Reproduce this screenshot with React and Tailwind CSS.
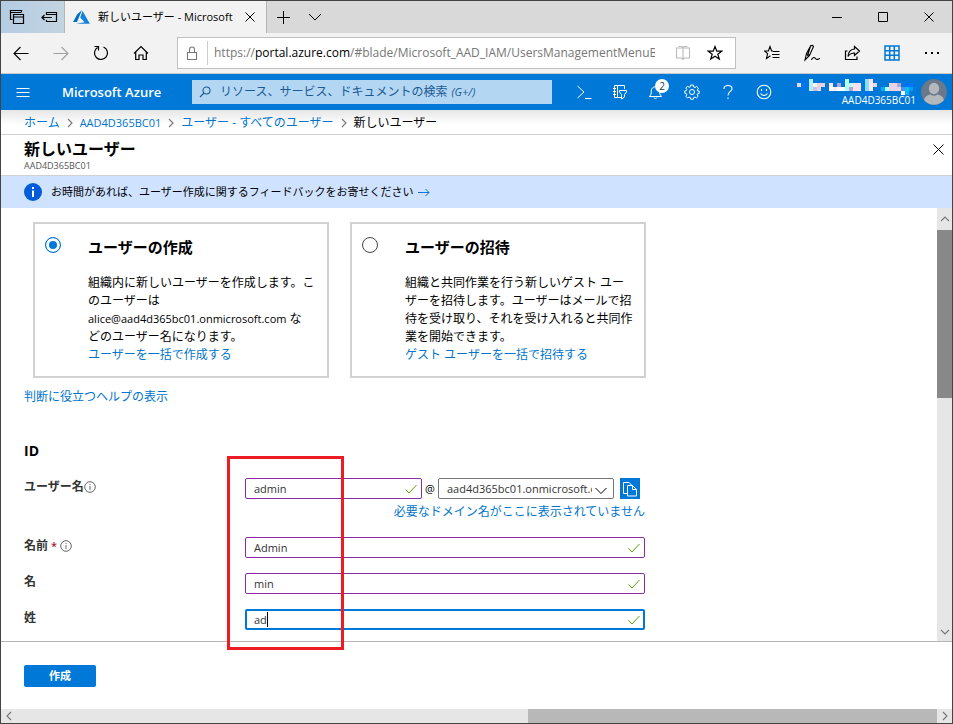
import { useState } from 'react';

const MOSAIC = [
  [12, 0, '#b0f0ff'], [48, 0, '#b8fff4'], [68, 0, '#90dcff'], [72, 0, '#ffe0ea'], [4, 0, '#0070f0'],
  [0, 4, '#e8d8e4'], [4, 4, '#0078f0'], [8, 4, '#0070f0'], [12, 4, '#b0f0ff'], [16, 4, '#fff0ea'],
  [20, 4, '#e4d4e4'], [24, 4, '#e4d4e4'], [32, 4, '#ffe8f0'], [40, 4, '#b0a4d8'], [48, 4, '#b8fff4'],
  [52, 4, '#b8fff4'], [56, 4, '#ffe0ea'], [60, 4, '#ffe0ea'], [68, 4, '#80e0ff'], [72, 4, '#ffe8f0'],
  [76, 4, '#e8d4e4'], [92, 4, '#e8d4e4'], [96, 4, '#e8d4e4'], [100, 4, '#b0a4d8'], [108, 4, '#0070f8'],
  [112, 4, '#0078ff'], [4, 8, '#0070f0'], [12, 8, '#b0f0ff'], [16, 8, '#c8c0e0'], [20, 8, '#e4d4e4'],
  [32, 8, '#ffffff'], [36, 8, '#ffe8f0'], [40, 8, '#ffffff'], [44, 8, '#ffffff'], [48, 8, '#a8fff0'],
  [52, 8, '#b0a4d8'], [56, 8, '#ffe0ea'], [60, 8, '#ffe0ea'], [68, 8, '#80e0ff'], [72, 8, '#ffe8f0'],
  [84, 8, '#00b0ff'], [88, 8, '#b0ffff'], [92, 8, '#e8d4e4'], [96, 8, '#e8d4e4'], [100, 8, '#e8d4e4'],
  [104, 8, '#5090e8'], [108, 8, '#00c0ff'], [112, 8, '#00a0f0'], [104, 12, '#ffffff'],
  [108, 12, '#00b8ff'], [68, 12, '#0070f0'],
];

function Icon({ size = 16, sw = 1, className = '', children }) {
  return (
    <svg
      width={size}
      height={size}
      viewBox={`0 0 ${size} ${size}`}
      fill="none"
      stroke="currentColor"
      strokeWidth={sw}
      className={`shrink-0 ${className}`}
      aria-hidden="true"
    >
      {children}
    </svg>
  );
}

const CloseIcon = ({ size = 12 }) => (
  <Icon size={size}>
    <path d={`M0.5 0.5L${size - 0.5} ${size - 0.5}M${size - 0.5} 0.5L0.5 ${size - 0.5}`} />
  </Icon>
);

const InfoIcon = () => (
  <Icon size={12} sw={0.9} className="text-[#555]">
    <circle cx="6" cy="6" r="5.300" />
    <path d="M6 5v4M6 3v1" />
  </Icon>
);

const Chevron = ({ d, className = '' }) => (
  <Icon size={10} sw={1.1} className={className}>
    <path d={d} />
  </Icon>
);

function IconButton({ label, className, children }) {
  return (
    <button type="button" aria-label={label} className={`flex items-center justify-center shrink-0 ${className}`}>
      {children}
    </button>
  );
}

function TabBar() {
  return (
    <div className="h-8 flex shrink-0 bg-[#d9d9d9]">
      <div className="w-16 flex shrink-0 bg-linear-to-r from-[#b4cce2] to-[#c3d4e2] border-r border-[#b5b5b5]">
        <IconButton label="保存したタブ" className="w-8">
          <Icon size={16} sw={1.2}>
            <path d="M3.5 10.500H1.500V1.500H12.500V3.500M1.500 3.500H12" />
            <path d="M4.500 5.500H14.500V14.500H4.500zM4.500 8H14.500" />
          </Icon>
        </IconButton>
        <IconButton label="タブを保存して閉じる" className="w-8">
          <Icon size={18} sw={1.2}>
            <path d="M6.500 7V4.500H16.500V13.500H6.500V12M6.500 6.500H16.500M2 9.500H12M4.500 7L2 9.500L4.500 12" />
          </Icon>
        </IconButton>
      </div>
      <div className="w-[202px] flex items-center shrink-0 bg-[#f2f2f2] pl-2 border-r border-[#b5b5b5]">
        <svg width="17" height="14" viewBox="0 0 17 14" className="shrink-0" aria-hidden="true">
          <path d="M9 0L4.300 4.200L0 12H4z" fill="#0072c6" />
          <path d="M9.600 1L7.200 7.500L11.600 12.300L3 13.800H16.800z" fill="#1182da" />
        </svg>
        <span className="ml-2 flex-1 min-w-0 overflow-hidden whitespace-nowrap text-[11px]">
          新しいユーザー - Microsoft Azure
        </span>
        <IconButton label="タブを閉じる" className="w-8 h-8">
          <CloseIcon size={10} />
        </IconButton>
      </div>
      <IconButton label="新しいタブ" className="w-8">
        <Icon size={13}><path d="M6.500 0V13M0 6.500H13" /></Icon>
      </IconButton>
      <IconButton label="タブのプレビュー" className="w-8">
        <Icon size={14}><path d="M1 4L7 10L13 4" /></Icon>
      </IconButton>
      <div className="ml-auto flex">
        <IconButton label="最小化" className="w-[46px]">
          <Icon size={10}><path d="M0 5.500H10" /></Icon>
        </IconButton>
        <IconButton label="最大化" className="w-[46px]">
          <Icon size={10}><path d="M0.500 0.500H9.500V9.500H0.500z" /></Icon>
        </IconButton>
        <IconButton label="閉じる" className="w-[46px]">
          <CloseIcon size={10} />
        </IconButton>
      </div>
    </div>
  );
}

function Toolbar() {
  return (
    <div className="h-[41px] flex items-center shrink-0 bg-[#f2f2f2] border-b border-[#c8c8c8]">
      <IconButton label="戻る" className="w-10 h-10">
        <Icon size={16} sw={1.1}><path d="M15.500 8.500H1M7.500 2L1 8.500L7.500 15" /></Icon>
      </IconButton>
      <IconButton label="進む" className="w-10 h-10 text-[#a0a0a0]">
        <Icon size={16} sw={1.1}><path d="M0.500 8.500H15M8.500 2L15 8.500L8.500 15" /></Icon>
      </IconButton>
      <IconButton label="更新" className="w-10 h-10">
        <Icon size={16} sw={1.2}><path d="M10.500 2A6.500 6.500 0 1 1 4.500 2.500M1.500 1.500H5.500V5.500" /></Icon>
      </IconButton>
      <IconButton label="ホーム" className="w-10 h-10">
        <Icon size={16} sw={1.2}>
          <path d="M1 8.500L8 1.500L15 8.500M2.700 7V14.500H6V10H10V14.500H13.300V7" />
        </Icon>
      </IconButton>
      <div className="ml-4 h-8 flex-1 min-w-0 flex items-center bg-white border border-[#c0c0c0]">
        <IconButton label="サイト情報" className="w-7 text-[#777]">
          <Icon size={14} sw={1.1}>
            <path d="M2.500 6.500H11.500V13.500H2.500zM4.500 6.500V3.500A2.500 2.500 0 0 1 9.500 3.500V6.500" />
          </Icon>
        </IconButton>
        <div className="ml-px w-px h-6 bg-[#ccc]" />
        <div className="ml-[6px] mr-3 flex-1 min-w-0 overflow-hidden whitespace-nowrap text-[12px] text-[#767676]">
          https://<span className="text-black">portal.azure.com</span>/#blade/Microsoft_AAD_IAM/UsersManagementMenuBlade
        </div>
        <IconButton label="読み取りビュー" className="w-8 h-7 text-[#bbb]">
          <Icon size={16} sw={1.1}>
            <path d="M8 3H1.500V13H6.500L8 14.500L9.500 13H14.500V3H8V14M3.500 1.500H7L8 3L9 1.500H12.500" />
          </Icon>
        </IconButton>
        <IconButton label="お気に入りに追加" className="w-8 h-7 mr-1">
          <Icon size={16} sw={1.2}>
            <path d="M8 1.500L9.800 6.200H14.700L10.800 9.200L12.300 14L8 11.200L3.700 14L5.200 9.200L1.300 6.200H6.200z" />
          </Icon>
        </IconButton>
      </div>
      <div className="ml-4 flex">
        <IconButton label="お気に入り" className="w-10 h-10">
          <Icon size={16} sw={1.1}>
            <path d="M9 6H7.600L6 1.500L4.400 6H0.500L3.600 8.700L2.500 13.500L6.500 10.800M9 6.500H15.500M8 9.500H15.500M8.500 12.500H15.500" />
          </Icon>
        </IconButton>
        <IconButton label="メモを追加" className="w-10 h-10">
          <Icon size={18} sw={1.1}>
            <path d="M2 16L3.500 9.500L7.500 2Q9.500 0.500 10.500 2.500L6.500 11.500zM3.500 9.500L6.500 11.500M7.500 2L4.500 12M8 15.500C9.500 15.500 9.500 13.500 11 13.500S12.500 15.500 14 15.500S15.500 14.500 17 14.500" />
          </Icon>
        </IconButton>
        <IconButton label="共有" className="w-10 h-10">
          <Icon size={17} sw={1.2}>
            <path d="M3.500 6H1.500V14.500H13V11.500" />
            <path d="M10.500 1.500L15.500 6L10.500 10.500V8C7.500 8 5.500 9 4 11.500C4.300 7 6.500 4.300 10.500 4z" />
          </Icon>
        </IconButton>
        <IconButton label="アプリ" className="w-10 h-10 text-[#0078d7]">
          <Icon size={16} sw={1.5}>
            <path d="M1 1H15V15H1zM5.700 1V15M10.300 1V15M1 5.700H15M1 10.300H15" />
          </Icon>
        </IconButton>
        <IconButton label="設定など" className="w-10 h-10">
          <svg width="16" height="4" viewBox="0 0 16 4" aria-hidden="true">
            <path d="M1 1h2v2H1zM7 1h2v2H7zM13 1h2v2h-2z" fill="#000" />
          </svg>
        </IconButton>
      </div>
    </div>
  );
}

function PortalHeader() {
  return (
    <header className="h-9 flex items-center shrink-0 bg-[#0078d7] text-white pl-[15px] pr-[5px]">
      <IconButton label="メニュー" className="w-[14px] h-9">
        <Icon size={14}><path d="M0.500 3.500H13.500M0.500 7.500H13.500M0.500 11.500H13.500" /></Icon>
      </IconButton>
      <a href="#home" className="ml-8 w-[98px] shrink-0 whitespace-nowrap text-[13px] font-semibold">Microsoft Azure</a>
      <label className="ml-8 h-6 flex-1 min-w-0 max-w-[360px] flex items-center bg-[#b3d6f2] text-[#1b5a92] pl-[7px] cursor-text">
        <Icon size={12} sw={1.1}><circle cx="7.500" cy="4.500" r="3.500" /><path d="M5 7L1 11" /></Icon>
        <span className="ml-[9px] relative flex-1 flex items-center whitespace-nowrap text-[12px]">
          リソース、サービス、ドキュメントの検索<i className="ml-1 text-[11px]">(G+/)</i>
          <input type="search" aria-label="検索" className="absolute inset-0 w-full bg-transparent outline-none" />
        </span>
      </label>
      <nav className="ml-[14px] flex shrink-0">
        <IconButton label="Cloud Shell" className="w-9 h-9">
          <Icon size={16}><path d="M1.500 2L8 8L1.500 14M9 14.500H15.500" /></Icon>
        </IconButton>
        <IconButton label="ディレクトリとサブスクリプション" className="w-9 h-9">
          <Icon size={16}>
            <path d="M9 13.500H2.500V1.500H12.500V5M5.500 1.500V13.500M1 4.500H4M1 7.500H4M1 10.500H4" />
            <path d="M7.500 6.500H14.500V8L12.500 10.500V13L9.500 15V10.500L7.500 8z" />
          </Icon>
        </IconButton>
        <IconButton label="通知" className="relative w-9 h-9">
          <Icon size={16} className="-ml-px">
            <path d="M1.500 12.500H13.500L11.800 10V7A4.300 4.300 0 0 0 3.200 7V10zM6 13.500A1.600 1.600 0 0 0 9 13.500" />
          </Icon>
          <span className="absolute left-[17px] top-[5px] w-[14px] h-[14px] rounded-full bg-white text-[#123a66] text-[10px] leading-[14px] text-center">
            2
          </span>
        </IconButton>
        <IconButton label="設定" className="w-9 h-9">
          <Icon size={16}>
            <circle cx="8" cy="8" r="2.500" />
            <path d="M6.700 1H9.300L9.700 3L11 3.500L12.700 2.400L14.500 4.200L13.300 5.900L13.800 7L15.200 7V9.400L13.600 9.700L13.200 10.800L14.200 12.300L12.400 14L10.900 13L9.700 13.500L9.300 15.200H6.700L6.300 13.500L5 13L3.500 14L1.800 12.300L2.800 10.800L2.300 9.600L0.800 9.300V6.900L2.400 6.600L2.800 5.500L1.800 4L3.600 2.200L5.100 3.300L6.300 2.800z" />
          </Icon>
        </IconButton>
        <IconButton label="ヘルプ" className="w-9 h-9">
          <Icon size={16} sw={1.1}>
            <path d="M4 5V4.500C4 2.500 5.500 1.500 8 1.500S12 2.700 12 4.700C12 7.500 8 7.500 8 11.500" />
            <path d="M8 13.500V15" />
          </Icon>
        </IconButton>
        <IconButton label="フィードバック" className="w-9 h-9">
          <Icon size={16} sw={1.1}>
            <circle cx="8" cy="8" r="6.800" />
            <path d="M4.500 9.500Q8 13.500 11.500 9.500M5.500 5V7M10.500 5V7" />
          </Icon>
        </IconButton>
      </nav>
      <button type="button" className="ml-auto flex items-center shrink-0 gap-[5px]" aria-label="アカウント">
        <span className="flex flex-col items-end">
          <svg width="119" height="16" viewBox="0 0 119 16" aria-hidden="true">
            {MOSAIC.map(([x, y, fill]) => (
              <rect key={`${x}-${y}`} x={x} y={y} width="4" height="4" fill={fill} />
            ))}
          </svg>
          <span className="text-[10px] leading-[10px]">AAD4D365BC01</span>
        </span>
        <svg width="26" height="26" viewBox="0 0 26 26" aria-hidden="true">
          <circle cx="13" cy="13" r="13" fill="#69788a" />
          <ellipse cx="13" cy="9.500" rx="5.200" ry="5.800" fill="#b4b8bc" />
          <path d="M3 21C4 17 7 16 9.500 15.500Q13 18 16.500 15.500C19 16 22 17 23 21A13 13 0 0 1 3 21z" fill="#b4b8bc" />
        </svg>
      </button>
    </header>
  );
}

function Breadcrumb() {
  return (
    <nav className="h-[25px] flex items-center shrink-0 pl-[23px] pt-px text-[12px] border-b border-[#d1d1d1] bg-linear-to-b from-[#e6e6e6] to-white to-60% whitespace-nowrap">
      <a href="#home" className="text-[#0074cc]">ホーム</a>
      <Chevron d="M3 1L7 5L3 9" className="mx-[5px] text-[#777]" />
      <a href="#tenant" className="text-[11px] text-[#0074cc]">AAD4D365BC01</a>
      <Chevron d="M3 1L7 5L3 9" className="mx-[5px] text-[#777]" />
      <a href="#users" className="text-[#0074cc]">ユーザー - すべてのユーザー</a>
      <Chevron d="M3 1L7 5L3 9" className="mx-[5px] text-[#777]" />
      <span>新しいユーザー</span>
    </nav>
  );
}

function ChoiceCard({ id, title, checked, onSelect, link, children }) {
  return (
    <div className="w-[296px] flex gap-[27px] border-2 border-[#d1d1d1] pt-[13px] pb-3 pl-[10px]">
      <input
        id={id}
        type="radio"
        name="mode"
        checked={checked}
        onChange={onSelect}
        className="appearance-none shrink-0 w-4 h-4 rounded-full border border-[#444] bg-white checked:border-[#0078d7] checked:bg-[#0078d7] checked:shadow-[inset_0_0_0_3px_white]"
      />
      <div className="whitespace-nowrap">
        <label htmlFor={id} className="block text-[15px] leading-5 font-bold">{title}</label>
        <p className="mt-[17px]">{children}</p>
        <a href="#bulk" className="block text-[#0074cc]">{link}</a>
      </div>
    </div>
  );
}

const Tick = () => (
  <Icon size={12} className="absolute right-[5px] top-[5px] text-[#57a300]">
    <path d="M0.500 6.500L4 10L11.500 2" />
  </Icon>
);

function Field({ id, value, onChange, focused }) {
  return (
    <div className="relative flex-1 min-w-0">
      <input
        id={id}
        type="text"
        value={value}
        onChange={e => onChange(e.target.value)}
        className={`block w-full h-[21px] rounded-[2px] bg-white text-[11px] text-[#333] outline-none ${
          focused ? 'border-2 border-[#0078d7] px-[7px]' : 'border border-[#8a2da5] px-2'
        }`}
      />
      {focused && <span className="absolute left-[22px] top-[3px] w-px h-[15px] bg-black" />}
      <Tick />
    </div>
  );
}

function UserForm() {
  const [form, setForm] = useState({ user: 'admin', name: 'Admin', first: 'min', last: 'ad' });
  const set = key => value => setForm(f => ({ ...f, [key]: value }));
  const label = 'w-[221px] shrink-0 flex items-center h-[18px] font-semibold text-[#333]';

  return (
    <form id="user-form" className="relative mt-[17px]">
      <div className="flex h-[59px]">
        <label htmlFor="user" className={label}>ユーザー名<InfoIcon /></label>
        <div className="w-[400px]">
          <div className="flex items-center h-[21px]">
            <div className="w-[177px] flex">
              <Field id="user" value={form.user} onChange={set('user')} />
            </div>
            <span className="w-4 text-center text-[11px]">@</span>
            <div className="relative w-44">
              <select
                aria-label="ドメイン"
                className="block appearance-none w-full h-[21px] rounded-[2px] border border-[#777] bg-white pl-2 pr-[21px] text-[11px] text-[#333] overflow-hidden"
              >
                <option>aad4d365bc01.onmicrosoft.com</option>
              </select>
              <Icon size={12} className="absolute right-[7px] top-[6px] pointer-events-none">
                <path d="M0.500 4L6 9.500L11.500 4" />
              </Icon>
            </div>
            <IconButton label="コピー" className="ml-[6px] w-5 h-[21px] bg-[#0078d7] text-white">
              <Icon size={16}>
                <path d="M5.500 12.500H1.500V1.500H7L9.500 4" />
                <path d="M5.500 4.500H10.500L14.500 8.500V15H5.500zM10.500 4.500V8.500H14.500" />
              </Icon>
            </IconButton>
          </div>
          <a href="#domain" className="mt-1 block text-right text-[#0074cc]">必要なドメイン名がここに表示されていません</a>
        </div>
      </div>
      <div className="flex h-9">
        <label htmlFor="name" className={label}>
          名前<span className="mx-[3px] text-[11px] text-[#a4262c]">*</span><InfoIcon />
        </label>
        <div className="w-[400px] flex"><Field id="name" value={form.name} onChange={set('name')} /></div>
      </div>
      <div className="flex h-9">
        <label htmlFor="first" className={label}>名</label>
        <div className="w-[400px] flex"><Field id="first" value={form.first} onChange={set('first')} /></div>
      </div>
      <div className="flex h-8">
        <label htmlFor="last" className={label}>姓</label>
        <div className="w-[400px] flex"><Field id="last" value={form.last} onChange={set('last')} focused /></div>
      </div>
      {/* highlight frame over the filled-in fields */}
      <div className="absolute left-[203px] -top-[22px] w-[117px] h-[194px] border-3 border-[#ed1c24] z-10 pointer-events-none" />
    </form>
  );
}

export default function App() {
  const [mode, setMode] = useState('create');

  return (
    <div className="min-h-screen flex flex-col bg-white border border-[#444] text-black text-[12px] leading-[18px] font-['Open_Sans','Noto_Sans_CJK_JP',sans-serif]">
      <TabBar />
      <Toolbar />
      <PortalHeader />
      <Breadcrumb />

      <div className="h-[41px] flex justify-between shrink-0 pl-[23px] pr-2 border-b border-[#d1d1d1]">
        <div className="pt-1">
          <h1 className="text-[16px] leading-5 font-bold">新しいユーザー</h1>
          <p className="text-[9px] leading-[14px] text-[#555]">AAD4D365BC01</p>
        </div>
        <IconButton label="ブレードを閉じる" className="h-7">
          <CloseIcon size={11} />
        </IconButton>
      </div>

      <div className="h-8 flex items-center shrink-0 bg-[#cfe2ff] pl-[23px]">
        <svg width="18" height="18" viewBox="0 0 18 18" aria-hidden="true">
          <circle cx="9" cy="9" r="9" fill="#015cda" />
          <path d="M8 7.500H10V14H8zM8 4H10V6H8z" fill="#fff" />
        </svg>
        <a href="#feedback" className="ml-[9px] flex items-center gap-1 text-[11px]">
          お時間があれば、ユーザー作成に関するフィードバックをお寄せください
          <Icon size={12} className="text-[#0072d9]"><path d="M0 6.500H11M7.500 3L11 6.500L7.500 10" /></Icon>
        </a>
      </div>

      <div className="flex-1 flex">
        <main className="flex-1 min-w-0 pl-[23px] pt-[14px]">
          <div className="ml-[9px] flex gap-[21px]">
            <ChoiceCard
              id="create"
              title="ユーザーの作成"
              checked={mode === 'create'}
              onSelect={() => setMode('create')}
              link="ユーザーを一括で作成する"
            >
              組織内に新しいユーザーを作成します。こ<br />
              のユーザーは<br />
              <span className="text-[11px]">alice@aad4d365bc01.onmicrosoft.com</span> な<br />
              どのユーザー名になります。
            </ChoiceCard>
            <ChoiceCard
              id="invite"
              title="ユーザーの招待"
              checked={mode === 'invite'}
              onSelect={() => setMode('invite')}
              link="ゲスト ユーザーを一括で招待する"
            >
              組織と共同作業を行う新しいゲスト ユー<br />
              ザーを招待します。ユーザーはメールで招<br />
              待を受け取り、それを受け入れると共同作<br />
              業を開始できます。
            </ChoiceCard>
          </div>
          <a href="#help" className="mt-[10px] block w-fit text-[#0074cc]">判断に役立つヘルプの表示</a>
          <h2 className="mt-[35px] text-[14px] leading-5 font-bold">ID</h2>
          <UserForm />
        </main>
        <div className="w-[15px] shrink-0 flex flex-col bg-[#e6e6e6] text-[#777]">
          <IconButton label="上へスクロール" className="h-[22px]"><Chevron d="M1 7L5 3L9 7" /></IconButton>
          <div className="h-[168px] bg-[#888]" />
          <IconButton label="下へスクロール" className="mt-auto h-[18px]"><Chevron d="M1 3L5 7L9 3" /></IconButton>
        </div>
      </div>

      <footer className="h-[68px] flex items-center shrink-0 pl-[23px] border-t border-[#b5b5b5]">
        <button type="submit" form="user-form" className="w-[72px] h-[22px] rounded-[2px] bg-[#0078d7] text-white text-[11px] font-bold">
          作成
        </button>
      </footer>
      <div className="h-[14px] flex shrink-0 bg-[#e6e6e6] text-[#777]">
        <IconButton label="左へスクロール" className="w-[15px]"><Chevron d="M7 1L3 5L7 9" /></IconButton>
        <div className="ml-auto w-[43%] bg-[#b8b8b8]" />
        <IconButton label="右へスクロール" className="w-[15px]"><Chevron d="M3 1L7 5L3 9" /></IconButton>
      </div>
    </div>
  );
}
